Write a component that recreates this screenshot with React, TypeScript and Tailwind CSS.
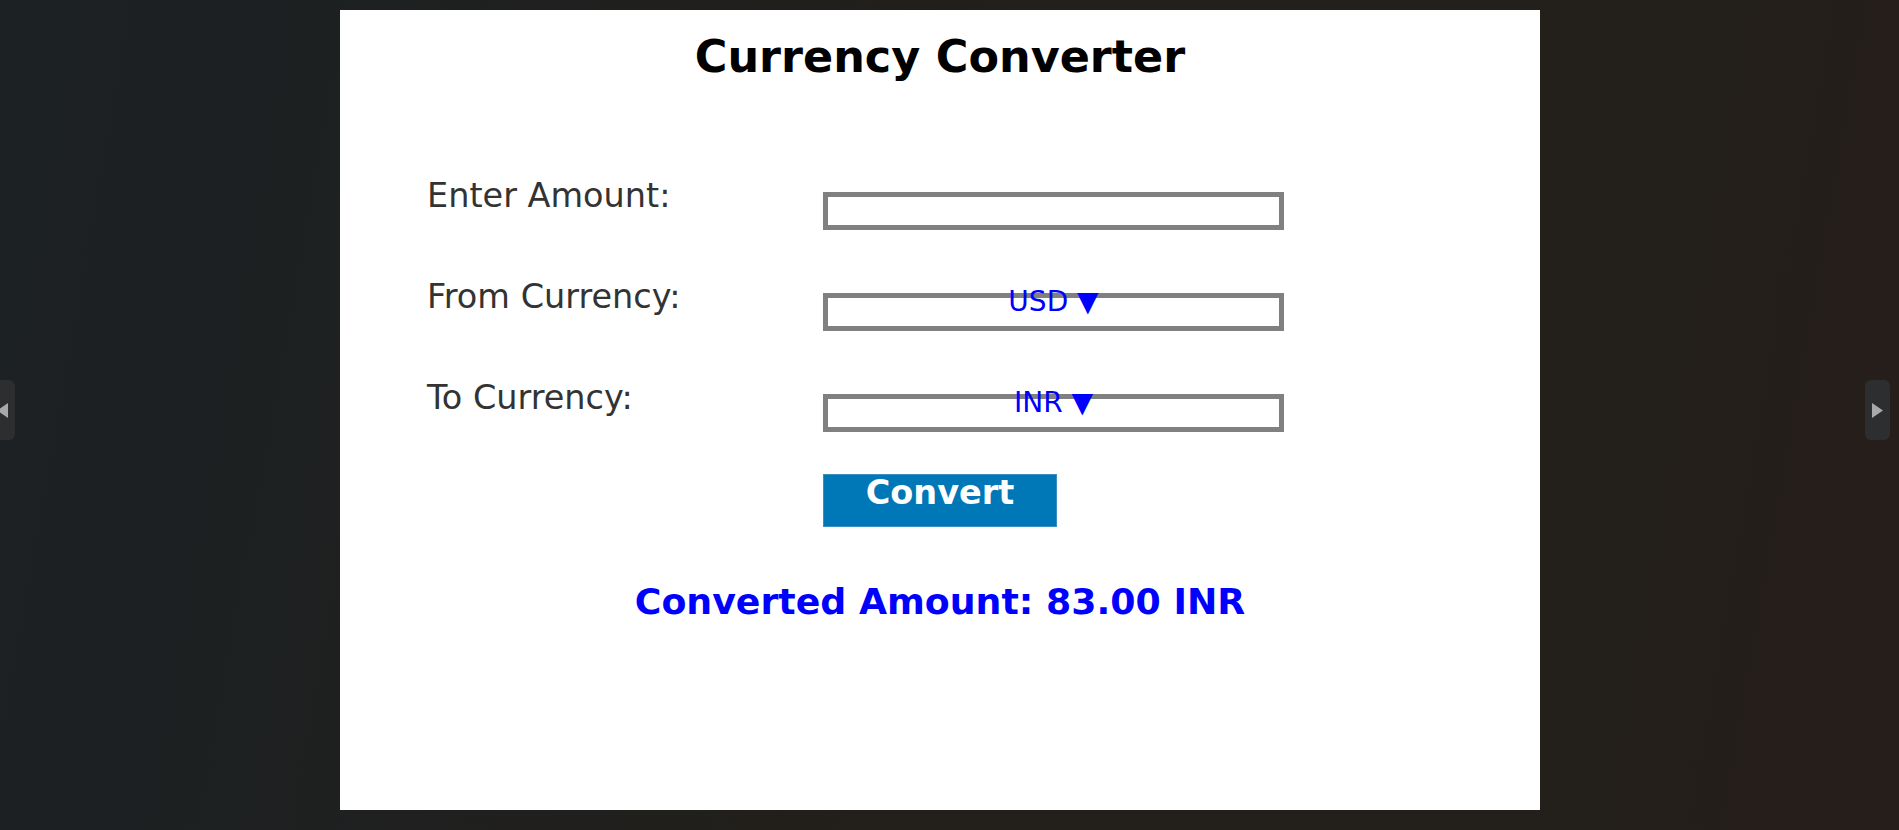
import React from "react";

const font = { fontFamily: '"DejaVu Sans", Verdana, sans-serif' };

function Row({ label, value }: { label: string; value?: string }) {
  return (
    <div className="flex items-start h-[50px]">
      <div className="w-[396px] -mt-[1px] text-[33.5px] leading-none text-[#333333] whitespace-nowrap">{label}</div>
      <div className="mt-[12px] w-[461px] h-[38px] border-[5px] border-[#808080] bg-white flex justify-center items-start">
        {value && (
          <span className="-mt-[10px] text-[28px] leading-none text-[#0000ff] whitespace-pre">
            {value} ▼
          </span>
        )}
      </div>
    </div>
  );
}

export default function App() {
  return (
    <div
      style={font}
      className="relative w-[1899px] h-[830px] overflow-hidden bg-[linear-gradient(100deg,#1c2124_0%,#1e2021_20%,#231f1a_50%,#231f1a_85%,#271e1c_100%)] pl-[340px] pt-[10px]"
    >
      <div className="w-[1200px] h-[800px] bg-white flex flex-col pt-[25px] pl-[87px]">
        <h1 className="-ml-[87px] w-[1200px] text-center text-[44.5px] leading-none font-bold text-black">
          Currency Converter
        </h1>
        <div className="mt-[100px] flex flex-col gap-[51px]">
          <Row label="Enter Amount:" />
          <Row label="From Currency:" value="USD" />
          <Row label="To Currency:" value="INR" />
        </div>
        <button
          style={font}
          className="mt-[42px] ml-[396px] w-[234px] h-[53px] bg-[#0077b6] border border-[#3a8fc2] text-white font-bold text-[33.5px] leading-none flex justify-center items-start pt-[1px]"
        >
          Convert
        </button>
        <div className="-ml-[87px] w-[1200px] mt-[57px] text-center text-[36.3px] leading-none font-bold text-[#0000ff]">
          Converted Amount: 83.00 INR
        </div>
      </div>

      <div className="absolute left-[-10px] top-[380px] w-[25px] h-[60px] rounded-[6px] bg-[#2c2e30] flex items-center">
        <svg width="25" height="60" viewBox="0 0 25 60" className="block">
          <polygon points="18,23 18,38 7,30.5" fill="#a9a9a9" />
        </svg>
      </div>
      <div className="absolute left-[1865px] top-[380px] w-[25px] h-[60px] rounded-[6px] bg-[#2c2e30] flex items-center">
        <svg width="25" height="60" viewBox="0 0 25 60" className="block">
          <polygon points="7,23 7,38 18,30.5" fill="#a9a9a9" />
        </svg>
      </div>
    </div>
  );
}
